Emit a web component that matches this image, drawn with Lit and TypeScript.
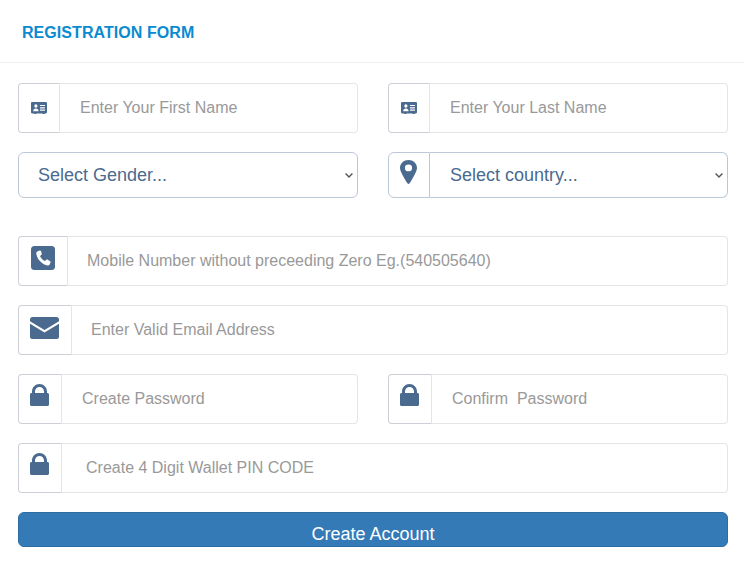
import { LitElement, html, css } from "lit";
import { customElement } from "lit/decorators.js";

const COLOR = "#4a6a8f";
const idCard = html`<svg class="i-card" viewBox="0 0 17 12" preserveAspectRatio="none"><path fill="${COLOR}" fill-rule="evenodd" d="M1.200 0h14.600c.7 0 1.200.5 1.200 1.200v9c0 .7-.5 1.200-1.200 1.200h-1.300v.6h-2.200v-.6H5.700v.6H3.500v-.6H1.200C.5 11.400 0 10.900 0 10.200v-9C0 .5.500 0 1.200 0zM5.200 2.300a1.700 1.700 0 1 0 0 3.400 1.700 1.700 0 0 0 0-3.400zM2.300 9.200h5.800c0-1.700-1.100-2.800-2.900-2.800s-2.900 1.100-2.900 2.800zM9.500 3v1.100h5.300V3zm0 2.300v1.100h5.300V5.300zm0 2.300v1.100h5.300V7.600z"/></svg>`;
const phone = html`<svg class="i-phone" viewBox="0 0 24 24"><rect width="24" height="24" rx="3.500" fill="${COLOR}"/><path fill="#fff" d="M8.600 4.600 6.300 5.400C5.500 5.800 5.200 6.500 5.300 7.400c.4 3.200 1.900 6 4.100 8.200 2.200 2.200 4.500 3.500 7.300 4 .9.100 1.600-.2 2-1l.8-2.100c.2-.5 0-.9-.4-1.200l-2.700-1.700c-.4-.2-.8-.2-1.100.1l-1.400 1.400c-1.100-.5-2-1.200-2.900-2.100-.9-1-1.600-2-2-3.100l1.500-1.200c.3-.3.4-.7.200-1.100L10 5c-.3-.4-.9-.6-1.400-.4z"/></svg>`;
const mail = html`<svg class="i-mail" viewBox="0 0 29 22"><path fill="${COLOR}" d="M2.500 0h24C27.900 0 29 1.100 29 2.500v1.700L14.500 13 0 4.200V2.500C0 1.100 1.100 0 2.500 0zM0 6.700l14.500 8.800L29 6.700v13C29 21 28 22 26.700 22H2.300C1 22 0 21 0 19.700z"/></svg>`;
const lock = html`<svg class="i-lock" viewBox="0 0 19 22"><path fill="${COLOR}" fill-rule="evenodd" d="M2 9V7.500C2 3.400 5.400 0 9.500 0S17 3.400 17 7.500V9h.5c.8 0 1.500.7 1.500 1.500v10c0 .8-.7 1.500-1.500 1.500h-16C.7 22 0 21.300 0 20.500v-10C0 9.700.7 9 1.500 9zM5 9h9V7.500C14 5 12 3 9.500 3S5 5 5 7.500z"/></svg>`;
const pin = html`<svg class="i-pin" viewBox="0 0 16 24" preserveAspectRatio="none"><path fill="${COLOR}" fill-rule="evenodd" d="M8 0c4.400 0 8 3.500 8 7.900 0 3.700-5 11.900-7 15.400-.5.800-1.500.8-2 0C5 19.800 0 11.600 0 7.900 0 3.500 3.600 0 8 0zm0 4.500a3.400 3.400 0 1 0 0 6.800 3.400 3.400 0 0 0 0-6.800z"/></svg>`;
const chevron = html`<svg class="chev" viewBox="0 0 8 5"><path d="M.6.6 4 4 7.400.6" fill="none" stroke="#555" stroke-width="1.400"/></svg>`;

@customElement("app-root")
export class AppRoot extends LitElement {
  static styles = css`
    :host {
      display: block;
      font-family: "Liberation Sans", Arial, sans-serif;
      background: #fff;
      height: 561px;
      overflow: hidden;
    }
    * { box-sizing: border-box; }
    .head {
      height: 63px;
      border-bottom: 1px solid #eeeeee;
      padding: 24px 0 0 22px;
      font-size: 16px;
      line-height: 18px;
      font-weight: 700;
      letter-spacing: 0.06px;
      color: #0a8bd0;
    }
    form {
      display: flex;
      flex-direction: column;
      padding: 20px 16px 0 18px;
    }
    .row { display: grid; gap: 30px; grid-template-columns: 1fr 1fr; margin-bottom: 19px; }
    .row.tight { margin-bottom: 38px; }
    .row.one { grid-template-columns: 1fr; }
    .group { display: flex; height: 50px; min-width: 0; }
    .group.short { height: 46px; }
    .addon {
      flex: none;
      display: flex;
      padding-left: 11px;
      border: 1px solid #ccd0d6;
      border-right: 1px solid #e5e5e5;
      border-radius: 4px 0 0 4px;
      background: #fff;
    }
    .w42 { width: 42px; }
    .w50 { width: 50px; }
    .w54 { width: 54px; }
    .w44 { width: 44px; }
    .addon svg { display: block; flex: none; }
    .addon svg.i-card { width: 16px; height: 12px; margin: 18px 0 0 1px; }
    .addon svg.i-phone { width: 24px; height: 24px; margin: 9px 0 0 1px; }
    .i-mail { width: 29px; height: 22px; margin-top: 11px; }
    .i-lock { width: 19px; height: 22px; margin-top: 9px; }
    .i-pin { width: 17px; height: 24px; margin-top: 7px; }
    input {
      flex: 1;
      min-width: 0;
      height: 100%;
      border: 1px solid #e5e5e5;
      border-left: 0;
      border-radius: 0 4px 4px 0;
      background: #fff;
      font: 16px "Liberation Sans", Arial, sans-serif;
      color: #555;
      outline: none;
      padding: 0 12px 0 20px;
    }
    input::placeholder { color: #999; opacity: 1; }
    input.p19 { padding-left: 19px; }
    input.p24 { padding-left: 24px; }
    .select-box { position: relative; flex: 1; min-width: 0; display: flex; }
    select {
      flex: 1;
      min-width: 0;
      width: 100%;
      height: 46px;
      appearance: none;
      -webkit-appearance: none;
      border: 1px solid #bcc8d8;
      border-radius: 6px;
      background: #fff;
      color: #4a6a8f;
      font: 18px "Liberation Sans", Arial, sans-serif;
      padding: 0 0 0 19px;
      outline: none;
    }
    select.joined {
      border-left: 0;
      border-radius: 0 6px 6px 0;
      padding-left: 20px;
    }
    .chev {
      position: absolute;
      top: 21px;
      right: 5px;
      width: 8px;
      height: 5px;
      pointer-events: none;
    }
    .addon.sel {
      border-color: #bcc8d8;
      border-radius: 6px 0 0 6px;
    }
    button {
      width: 100%;
      height: 35px;
      border: 1px solid #2e6da4;
      border-radius: 6px;
      background: #337ab7;
      color: #fff;
      font: 18px/1 "Liberation Sans", Arial, sans-serif;
      padding: 8px 0 0;
      margin: 0;
    }
  `;

  render() {
    return html`
      <div class="head">REGISTRATION FORM</div>
      <form>
        <div class="row">
          <div class="group"><span class="addon w42">${idCard}</span><input placeholder="Enter Your First Name" /></div>
          <div class="group"><span class="addon w42">${idCard}</span><input placeholder="Enter Your Last Name" /></div>
        </div>
        <div class="row tight">
          <div class="group short">
            <div class="select-box"><select><option>Select Gender...</option></select>${chevron}</div>
          </div>
          <div class="group short">
            <span class="addon w42 sel">${pin}</span>
            <div class="select-box"><select class="joined"><option>Select country...</option></select>${chevron}</div>
          </div>
        </div>
        <div class="row one">
          <div class="group"><span class="addon w50">${phone}</span><input class="p19" placeholder="Mobile Number without preceeding Zero Eg.(540505640)" /></div>
        </div>
        <div class="row one">
          <div class="group"><span class="addon w54">${mail}</span><input class="p19" placeholder="Enter Valid Email Address" /></div>
        </div>
        <div class="row">
          <div class="group"><span class="addon w44">${lock}</span><input placeholder="Create Password" /></div>
          <div class="group"><span class="addon w44">${lock}</span><input placeholder="Confirm  Password" /></div>
        </div>
        <div class="row one">
          <div class="group"><span class="addon w44">${lock}</span><input class="p24" placeholder="Create 4 Digit Wallet PIN CODE" /></div>
        </div>
        <button type="button">Create Account</button>
      </form>
    `;
  }
}
